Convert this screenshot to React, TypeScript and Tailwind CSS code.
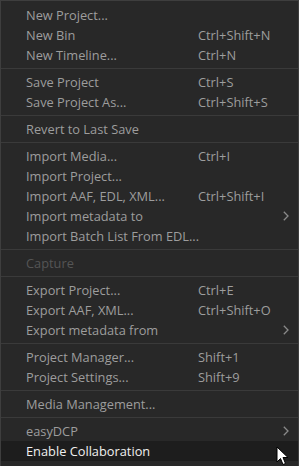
import React from "react";

type Item =
  | { type: "sep" }
  | { type: "item"; label: string; shortcut?: string; sub?: boolean; disabled?: boolean; active?: boolean };

const items: Item[] = [
  { type: "item", label: "New Project..." },
  { type: "item", label: "New Bin", shortcut: "Ctrl+Shift+N" },
  { type: "item", label: "New Timeline...", shortcut: "Ctrl+N" },
  { type: "sep" },
  { type: "item", label: "Save Project", shortcut: "Ctrl+S" },
  { type: "item", label: "Save Project As...", shortcut: "Ctrl+Shift+S" },
  { type: "sep" },
  { type: "item", label: "Revert to Last Save" },
  { type: "sep" },
  { type: "item", label: "Import Media...", shortcut: "Ctrl+I" },
  { type: "item", label: "Import Project..." },
  { type: "item", label: "Import AAF, EDL, XML...", shortcut: "Ctrl+Shift+I" },
  { type: "item", label: "Import metadata to", sub: true },
  { type: "item", label: "Import Batch List From EDL..." },
  { type: "sep" },
  { type: "item", label: "Capture", disabled: true },
  { type: "sep" },
  { type: "item", label: "Export Project...", shortcut: "Ctrl+E" },
  { type: "item", label: "Export AAF, XML...", shortcut: "Ctrl+Shift+O" },
  { type: "item", label: "Export metadata from", sub: true },
  { type: "sep" },
  { type: "item", label: "Project Manager...", shortcut: "Shift+1" },
  { type: "item", label: "Project Settings...", shortcut: "Shift+9" },
  { type: "sep" },
  { type: "item", label: "Media Management..." },
  { type: "sep" },
  { type: "item", label: "easyDCP", sub: true },
  { type: "item", label: "Enable Collaboration", active: true },
];

function Chevron() {
  return (
    <svg width="6" height="10" viewBox="0 0 6 10" className="ml-auto mr-[9px] shrink-0">
      <path d="M0.8 0.8 L5 5 L0.8 9.2" fill="none" stroke="#8a8a8a" strokeWidth="1.3" />
    </svg>
  );
}

function Cursor() {
  return (
    <svg width="14" height="20" viewBox="0 0 14 20" className="absolute left-[275px] top-[445px]">
      <path
        d="M1 1 L1 16 L4.5 12.5 L7 18.5 L9.5 17.5 L7 11.5 L12 11.5 Z"
        fill="#ffffff"
        stroke="#000000"
        strokeWidth="1"
        strokeLinejoin="round"
      />
    </svg>
  );
}

export default function App() {
  return (
    <div
      className="relative w-[299px] h-[466px] bg-[#282828] border-x border-t border-[#3e3e3e] pt-[4px] overflow-hidden"
      style={{ fontFamily: '"Open Sans", "Noto Sans", sans-serif' }}
    >
      {items.map((it, i) =>
        it.type === "sep" ? (
          <div key={i} className="py-[3px]">
            <div className="h-px bg-[#3a3a3a]" />
          </div>
        ) : (
          <div
            key={i}
            className={
              "flex items-center h-[20px] pl-[25px] text-[12.8px] leading-[20px] whitespace-nowrap " +
              (it.active ? "bg-[#1d1d1d] text-[#f0f0f0]" : it.disabled ? "text-[#555555]" : "text-[#9d9d9d]")
            }
          >
            <span className="w-[172px] shrink-0">{it.label}</span>
            {it.shortcut && <span>{it.shortcut}</span>}
            {it.sub && <Chevron />}
          </div>
        )
      )}
      <Cursor />
    </div>
  );
}
